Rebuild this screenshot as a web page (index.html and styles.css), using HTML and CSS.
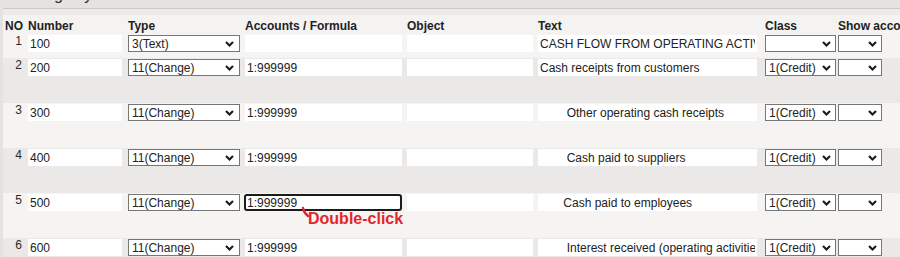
FILE: index.html
```html
<!DOCTYPE html>
<html>
    <head>
        <title>Cash flow layout</title>
        <link rel="stylesheet" href="styles.css">
    </head>
    <body>
        <div class="title"><span>Editing key</span></div>

        <div class="panel">
            <div class="row head">
                <div class="no">NO</div>
                <div>Number</div>
                <div>Type</div>
                <div>Accounts / Formula</div>
                <div>Object</div>
                <div>Text</div>
                <div>Class</div>
                <div>Show accounts</div>
            </div>

            <div class="row line first">
                <div class="no">1</div>
                <div><input class="fld w-num" value="100"></div>
                <div><span class="sel"><select class="w-type"><option>3(Text)</option></select><svg class="chev" viewBox="0 0 9 6"><path d="M1 1 L4.5 4.5 L8 1"/></svg></span></div>
                <div><input class="fld w-acc" value=""></div>
                <div><input class="fld w-obj" value=""></div>
                <div><input class="fld w-text" value="CASH FLOW FROM OPERATING ACTIVITIES"></div>
                <div><span class="sel"><select class="w-class"><option></option></select><svg class="chev" viewBox="0 0 9 6"><path d="M1 1 L4.5 4.5 L8 1"/></svg></span></div>
                <div><span class="sel"><select class="w-show"><option></option></select><svg class="chev" viewBox="0 0 9 6"><path d="M1 1 L4.5 4.5 L8 1"/></svg></span></div>
            </div>

            <div class="row line">
                <div class="no">2</div>
                <div><input class="fld w-num" value="200"></div>
                <div><span class="sel"><select class="w-type"><option>11(Change)</option></select><svg class="chev" viewBox="0 0 9 6"><path d="M1 1 L4.5 4.5 L8 1"/></svg></span></div>
                <div><input class="fld w-acc" value="1:999999"></div>
                <div><input class="fld w-obj" value=""></div>
                <div><input class="fld w-text" value="Cash receipts from customers"></div>
                <div><span class="sel"><select class="w-class"><option>1(Credit)</option></select><svg class="chev" viewBox="0 0 9 6"><path d="M1 1 L4.5 4.5 L8 1"/></svg></span></div>
                <div><span class="sel"><select class="w-show"><option></option></select><svg class="chev" viewBox="0 0 9 6"><path d="M1 1 L4.5 4.5 L8 1"/></svg></span></div>
            </div>

            <div class="row line">
                <div class="no">3</div>
                <div><input class="fld w-num" value="300"></div>
                <div><span class="sel"><select class="w-type"><option>11(Change)</option></select><svg class="chev" viewBox="0 0 9 6"><path d="M1 1 L4.5 4.5 L8 1"/></svg></span></div>
                <div><input class="fld w-acc" value="1:999999"></div>
                <div><input class="fld w-obj" value=""></div>
                <div><input class="fld w-text" value="        Other operating cash receipts"></div>
                <div><span class="sel"><select class="w-class"><option>1(Credit)</option></select><svg class="chev" viewBox="0 0 9 6"><path d="M1 1 L4.5 4.5 L8 1"/></svg></span></div>
                <div><span class="sel"><select class="w-show"><option></option></select><svg class="chev" viewBox="0 0 9 6"><path d="M1 1 L4.5 4.5 L8 1"/></svg></span></div>
            </div>

            <div class="row line">
                <div class="no">4</div>
                <div><input class="fld w-num" value="400"></div>
                <div><span class="sel"><select class="w-type"><option>11(Change)</option></select><svg class="chev" viewBox="0 0 9 6"><path d="M1 1 L4.5 4.5 L8 1"/></svg></span></div>
                <div><input class="fld w-acc" value="1:999999"></div>
                <div><input class="fld w-obj" value=""></div>
                <div><input class="fld w-text" value="        Cash paid to suppliers"></div>
                <div><span class="sel"><select class="w-class"><option>1(Credit)</option></select><svg class="chev" viewBox="0 0 9 6"><path d="M1 1 L4.5 4.5 L8 1"/></svg></span></div>
                <div><span class="sel"><select class="w-show"><option></option></select><svg class="chev" viewBox="0 0 9 6"><path d="M1 1 L4.5 4.5 L8 1"/></svg></span></div>
            </div>

            <div class="row line">
                <div class="no">5</div>
                <div><input class="fld w-num" value="500"></div>
                <div><span class="sel"><select class="w-type"><option>11(Change)</option></select><svg class="chev" viewBox="0 0 9 6"><path d="M1 1 L4.5 4.5 L8 1"/></svg></span></div>
                <div class="acc">
                    <input class="fld w-acc focus" value="1:999999">
                    <svg class="tick" viewBox="0 0 9 12"><path d="M2 2 Q3 7 7 10"/></svg>
                    <span class="note">Double-click</span>
                </div>
                <div><input class="fld w-obj" value=""></div>
                <div><input class="fld w-text" value="       Cash paid to employees"></div>
                <div><span class="sel"><select class="w-class"><option>1(Credit)</option></select><svg class="chev" viewBox="0 0 9 6"><path d="M1 1 L4.5 4.5 L8 1"/></svg></span></div>
                <div><span class="sel"><select class="w-show"><option></option></select><svg class="chev" viewBox="0 0 9 6"><path d="M1 1 L4.5 4.5 L8 1"/></svg></span></div>
            </div>

            <div class="row line">
                <div class="no">6</div>
                <div><input class="fld w-num" value="600"></div>
                <div><span class="sel"><select class="w-type"><option>11(Change)</option></select><svg class="chev" viewBox="0 0 9 6"><path d="M1 1 L4.5 4.5 L8 1"/></svg></span></div>
                <div><input class="fld w-acc" value="1:999999"></div>
                <div><input class="fld w-obj" value=""></div>
                <div><input class="fld w-text" value="        Interest received (operating activities)"></div>
                <div><span class="sel"><select class="w-class"><option>1(Credit)</option></select><svg class="chev" viewBox="0 0 9 6"><path d="M1 1 L4.5 4.5 L8 1"/></svg></span></div>
                <div><span class="sel"><select class="w-show"><option></option></select><svg class="chev" viewBox="0 0 9 6"><path d="M1 1 L4.5 4.5 L8 1"/></svg></span></div>
            </div>
        </div>
    </body>
</html>
```

FILE: styles.css
```css
html,
body{
    margin: 0;
    overflow: hidden;
}
body{
    width: 900px;
    height: 257px;
    background-color: #e4e3e1;
    color: #222;
    font-family: "Liberation Sans", Arial, sans-serif;
    font-size: 12px;
}
.title{
    height: 8px;
    overflow: hidden;
    padding-left: 14px;
}
.title span{
    display: block;
    margin-top: -13px;
    font-size: 16px;
    line-height: 16px;
    color: #333;
}
.panel{
    width: 960px;
    margin-left: 3px;
    padding-top: 6px;
    border-top: 1px solid #c9c9c9;
    background-color: #ecebe9;
}
.row{
    display: grid;
    grid-template-columns: 25px 100px 117px 162px 131px 227px 73px 80px;
}
.head{
    height: 19px;
    box-sizing: border-box;
    padding-top: 4px;
    line-height: 14px;
    font-weight: bold;
    white-space: nowrap;
    background-color: #f4f3f2;
}
.head .no{
    padding-left: 2px;
}
.line{
    height: 45px;
    background-color: #f5f4f3;
}
.line:nth-child(odd){
    background-color: #eae9e7;
}
.line.first{
    height: 24px;
}
.line > div{
    padding-top: 1px;
}
.line .no{
    padding-top: 0;
    padding-right: 6px;
    text-align: right;
    line-height: 14px;
    color: #2a2a2a;
}
.fld{
    display: block;
    height: 17px;
    box-sizing: border-box;
    margin: 0;
    padding: 0 2px;
    border: none;
    outline: none;
    background-color: white;
    color: #222;
    font: inherit;
}
.w-num{
    width: 94px;
}
.w-acc{
    width: 157px;
}
.w-obj{
    width: 126px;
}
.w-text{
    width: 219px;
}
.fld.focus{
    width: 158px;
    margin-left: -1px;
    padding-left: 1px;
    border: 2px solid #1b1b1b;
    border-radius: 3px;
}
.sel{
    position: relative;
    display: block;
    width: fit-content;
}
.sel select{
    display: block;
    appearance: none;
    height: 17px;
    margin: 0;
    padding: 0 0 0 3px;
    border: 1px solid #767676;
    border-radius: 0;
    background-color: white;
    color: #222;
    font: inherit;
}
.w-type{
    width: 112px;
}
.w-class{
    width: 71px;
}
.w-show{
    width: 44px;
}
.chev{
    position: absolute;
    top: 6px;
    right: 5px;
    width: 9px;
    height: 6px;
    fill: none;
    stroke: #1a1a1a;
    stroke-width: 2.1;
}
.sel .w-type + .chev{
    right: 6px;
}
.acc{
    position: relative;
}
.tick{
    position: absolute;
    left: 56px;
    top: 13px;
    width: 9px;
    height: 12px;
    fill: none;
    stroke: #e3262b;
    stroke-width: 2.5;
    stroke-linecap: round;
}
.note{
    position: absolute;
    left: 63px;
    top: 18px;
    font-size: 16px;
    font-weight: bold;
    line-height: 16px;
    color: #e3262b;
    white-space: nowrap;
}
```
